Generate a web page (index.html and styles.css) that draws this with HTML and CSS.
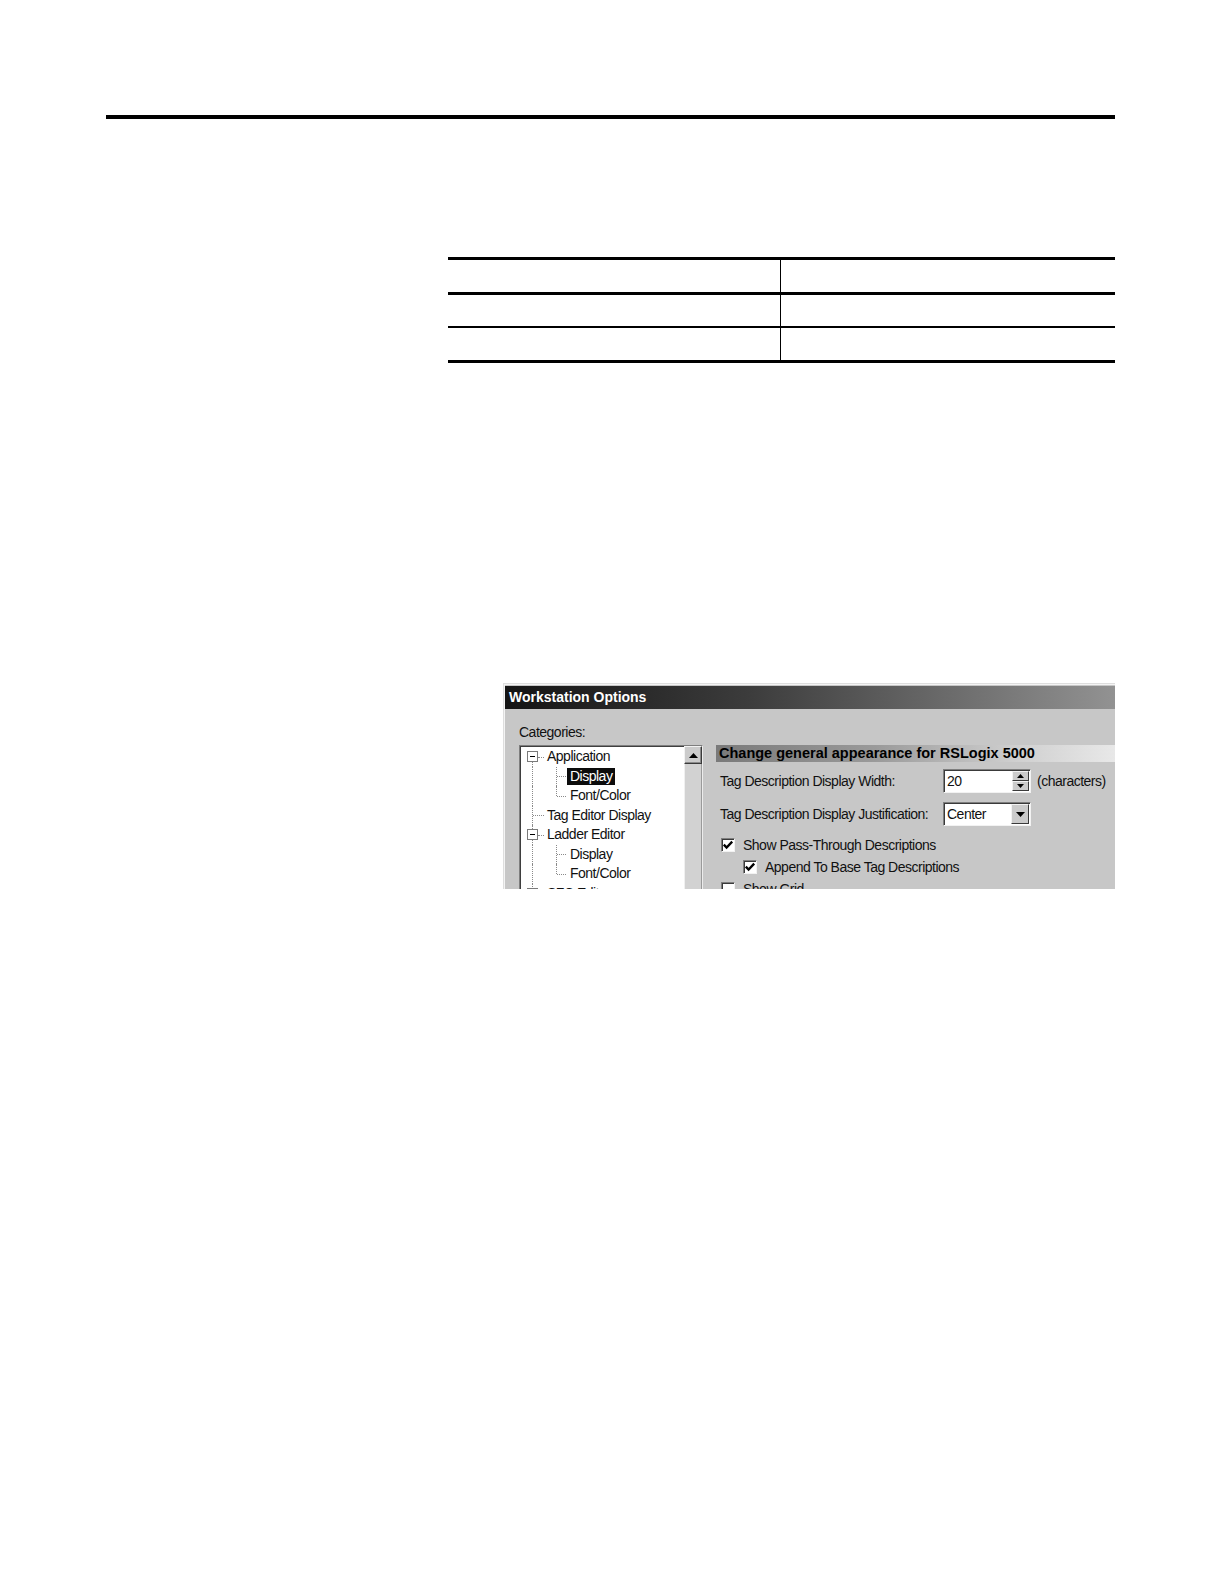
FILE: index.html
```html
<!DOCTYPE html>
<html lang="en">
<head>
<meta charset="utf-8">
<title>Workstation Options</title>
<link rel="stylesheet" href="styles.css">
</head>
<body>
<div class="page">
  <div class="top-rule"></div>

  <div class="spec-table">
    <div class="spec-row r1"><div class="cell c1"></div><div class="cell c2"></div></div>
    <div class="spec-row r2"><div class="cell c1"></div><div class="cell c2"></div></div>
    <div class="spec-row r3"><div class="cell c1"></div><div class="cell c2"></div></div>
  </div>

  <div class="shot">
    <div class="dlg">
      <div class="titlebar">Workstation Options</div>
      <div class="dlg-body">
        <div class="cat-label">Categories:</div>

        <div class="tree">
          <div class="tree-list">
            <div class="trow">
              <span class="vr from-mid"></span><span class="h1 after-box"></span><span class="exp"></span>
              <span class="txt l1">Application</span>
            </div>
            <div class="trow">
              <span class="vr full"></span><span class="v2 full"></span><span class="h2"></span>
              <span class="txt l2 sel">Display</span>
            </div>
            <div class="trow">
              <span class="vr full"></span><span class="v2 to-mid"></span><span class="h2"></span>
              <span class="txt l2">Font/Color</span>
            </div>
            <div class="trow">
              <span class="vr full"></span><span class="h1"></span>
              <span class="txt l1">Tag Editor Display</span>
            </div>
            <div class="trow">
              <span class="vr full"></span><span class="h1 after-box"></span><span class="exp"></span>
              <span class="txt l1">Ladder Editor</span>
            </div>
            <div class="trow">
              <span class="vr full"></span><span class="v2 full"></span><span class="h2"></span>
              <span class="txt l2">Display</span>
            </div>
            <div class="trow">
              <span class="vr full"></span><span class="v2 to-mid"></span><span class="h2"></span>
              <span class="txt l2">Font/Color</span>
            </div>
            <div class="trow">
              <span class="vr full"></span><span class="h1 after-box"></span><span class="exp"></span>
              <span class="txt l1">SFC Editor</span>
            </div>
          </div>
          <div class="vscroll">
            <div class="sb-btn">
              <svg width="9" height="5" viewBox="0 0 9 5"><path d="M0 5 L4.5 0 L9 5 Z" fill="#000"/></svg>
            </div>
            <div class="sb-track"></div>
          </div>
        </div>

        <div class="panel">
          <div class="panel-head">Change general appearance for RSLogix 5000</div>

          <div class="field first">
            <span class="lbl">Tag Description Display Width:</span>
            <div class="frame">
              <div class="frame-text">20</div>
              <div class="spin-btns">
                <div class="mini-btn"><svg width="7" height="4" viewBox="0 0 7 4"><path d="M0 4 L3.5 0 L7 4 Z" fill="#000"/></svg></div>
                <div class="mini-btn"><svg width="7" height="4" viewBox="0 0 7 4"><path d="M0 0 L3.5 4 L7 0 Z" fill="#000"/></svg></div>
              </div>
            </div>
            <span class="unit">(characters)</span>
          </div>

          <div class="field second">
            <span class="lbl">Tag Description Display Justification:</span>
            <div class="frame">
              <div class="frame-text">Center</div>
              <div class="combo-btn"><svg width="9" height="5" viewBox="0 0 9 5"><path d="M0 0 L4.5 5 L9 0 Z" fill="#000"/></svg></div>
            </div>
          </div>

          <div class="chk first">
            <span class="box"><svg width="12" height="12" viewBox="0 0 12 12"><path d="M1.8 5.6 L4.6 8.6 L10.2 2.6" fill="none" stroke="#000" stroke-width="2.3"/></svg></span>
            <span class="chk-text">Show Pass-Through Descriptions</span>
          </div>
          <div class="chk sub">
            <span class="box"><svg width="12" height="12" viewBox="0 0 12 12"><path d="M1.8 5.6 L4.6 8.6 L10.2 2.6" fill="none" stroke="#000" stroke-width="2.3"/></svg></span>
            <span class="chk-text">Append To Base Tag Descriptions</span>
          </div>
          <div class="chk">
            <span class="box"></span>
            <span class="chk-text">Show Grid</span>
          </div>
        </div>
      </div>
    </div>
  </div>
</div>
</body>
</html>
```

FILE: styles.css
```css
body {
  margin: 0;
  background: #ffffff;
}

.page {
  width: 1224px;
  padding-top: 115px;
}

.top-rule {
  margin-left: 106px;
  width: 1009px;
  height: 4px;
  background: #000;
}

/* empty spec table */
.spec-table {
  margin: 138px 0 0 448px;
  width: 667px;
  border-top: 3px solid #000;
}
.spec-row {
  display: grid;
  grid-template-columns: 333px 1fr;
}
.r1 { height: 32px; border-bottom: 3px solid #000; }
.r2 { height: 31px; border-bottom: 2px solid #000; }
.r3 { height: 32px; border-bottom: 3px solid #000; }
.c1 { border-right: 1px solid #000; }

/* dialog screenshot */
.shot {
  margin: 320px 0 0 503px;
  width: 612px;
  height: 206px;
  overflow: hidden;
}
.dlg {
  height: 400px;
  background: #c7c7c7;
  border-top: 1px solid #dedede;
  border-left: 1px solid #dedede;
  box-shadow: inset 1px 1px 0 #f4f4f4;
  padding: 2px 0 0 1px;
  font-family: "Liberation Sans", Arial, sans-serif;
  font-size: 14px;
  letter-spacing: -0.5px;
  color: #111;
}
.titlebar {
  height: 23px;
  line-height: 23px;
  padding-left: 4px;
  color: #fff;
  font-weight: bold;
  font-size: 14px;
  letter-spacing: 0;
  background: linear-gradient(to right, #141414 0%, #3c3c3c 40%, #929292 100%);
  white-space: nowrap;
}
.dlg-body {
  padding: 14px 0 0 14px;
  display: grid;
  grid-template-columns: 184px 1fr;
  grid-template-rows: 22px auto;
  column-gap: 13px;
}
.cat-label {
  grid-column: 1 / span 2;
  line-height: 18px;
}

/* tree view */
.tree {
  display: flex;
  height: 300px;
  box-sizing: border-box;
  background: #fff;
  border: 1px solid;
  border-color: #7e7e7e #ececec #ececec #7e7e7e;
  box-shadow: inset 1px 1px 0 #3e3e3e;
}
.tree-list {
  flex: 1;
  padding-top: 1px;
}
.trow {
  position: relative;
  height: 19.5px;
  white-space: nowrap;
}
.txt {
  position: relative;
  display: inline-block;
  margin-top: 1.25px;
  padding: 0 3px;
  line-height: 17px;
}
.txt.l1 { margin-left: 24px; }
.txt.l2 { margin-left: 47px; }
.txt.sel {
  background: #0c0c0c;
  color: #fff;
}
.vr, .v2 {
  position: absolute;
  border-left: 1px dotted #8a8a8a;
}
.vr { left: 12px; }
.v2 { left: 36px; }
.full { top: 0; bottom: 0; }
.from-mid { top: 50%; bottom: 0; }
.to-mid { top: 0; height: 50%; }
.h1, .h2 {
  position: absolute;
  top: 50%;
  border-top: 1px dotted #8a8a8a;
}
.h1 { left: 13px; width: 11px; }
.h1.after-box { left: 18px; width: 6px; }
.h2 { left: 37px; width: 9px; }
.exp {
  position: absolute;
  left: 7px;
  top: 50%;
  margin-top: -5.5px;
  width: 11px;
  height: 11px;
  box-sizing: border-box;
  border: 1px solid #7a7a7a;
  background: #fff;
}
.exp::after {
  content: "";
  position: absolute;
  left: 2px;
  top: 4px;
  width: 5px;
  height: 1px;
  background: #000;
}

.vscroll {
  width: 18px;
  display: flex;
  flex-direction: column;
}
.sb-btn {
  height: 18px;
  box-sizing: border-box;
  background: #cbcbcb;
  border: 1px solid;
  border-color: #f2f2f2 #3a3a3a #3a3a3a #f2f2f2;
  box-shadow: inset -1px -1px 0 #8a8a8a;
  display: flex;
  align-items: center;
  justify-content: center;
}
.sb-track {
  flex: 1;
  background: #d2d2d2;
  border-left: 1px solid #f0f0f0;
  border-right: 1px solid #9a9a9a;
}

/* right panel */
.panel {
  white-space: nowrap;
}
.panel-head {
  height: 17px;
  line-height: 17px;
  padding-left: 3px;
  font-weight: bold;
  font-size: 14.5px;
  letter-spacing: 0;
  color: #000;
  background: linear-gradient(to right, #7a7a7a 0%, #9a9a9a 40%, #cfcfcf 75%, #e8e8e8 100%);
}
.field {
  display: flex;
  align-items: center;
  height: 24px;
  padding-left: 4px;
}
.field.first { margin-top: 7px; }
.field.second { margin-top: 9px; }
.lbl { width: 223px; }
.frame {
  display: flex;
  width: 88px;
  height: 24px;
  box-sizing: border-box;
  background: #fff;
  border: 1px solid;
  border-color: #7e7e7e #f2f2f2 #f2f2f2 #7e7e7e;
  box-shadow: inset 1px 1px 0 #3a3a3a;
  padding: 1px;
}
.frame-text {
  flex: 1;
  padding-left: 2px;
  line-height: 20px;
}
.spin-btns {
  width: 17px;
  display: flex;
  flex-direction: column;
}
.mini-btn, .combo-btn {
  box-sizing: border-box;
  background: #cbcbcb;
  border: 1px solid;
  border-color: #f2f2f2 #3a3a3a #3a3a3a #f2f2f2;
  display: flex;
  align-items: center;
  justify-content: center;
}
.mini-btn { flex: 1; }
.combo-btn { width: 18px; }
.unit { margin-left: 6px; }

.chk {
  display: flex;
  align-items: center;
  height: 22px;
  padding-left: 5px;
}
.chk.first { margin-top: 8px; }
.chk.sub { padding-left: 27px; }
.box {
  width: 14px;
  height: 14px;
  box-sizing: border-box;
  background: #fff;
  border: 1px solid;
  border-color: #7e7e7e #f2f2f2 #f2f2f2 #7e7e7e;
  box-shadow: inset 1px 1px 0 #3a3a3a;
  display: flex;
  align-items: center;
  justify-content: center;
}
.chk-text { margin-left: 8px; }
```
